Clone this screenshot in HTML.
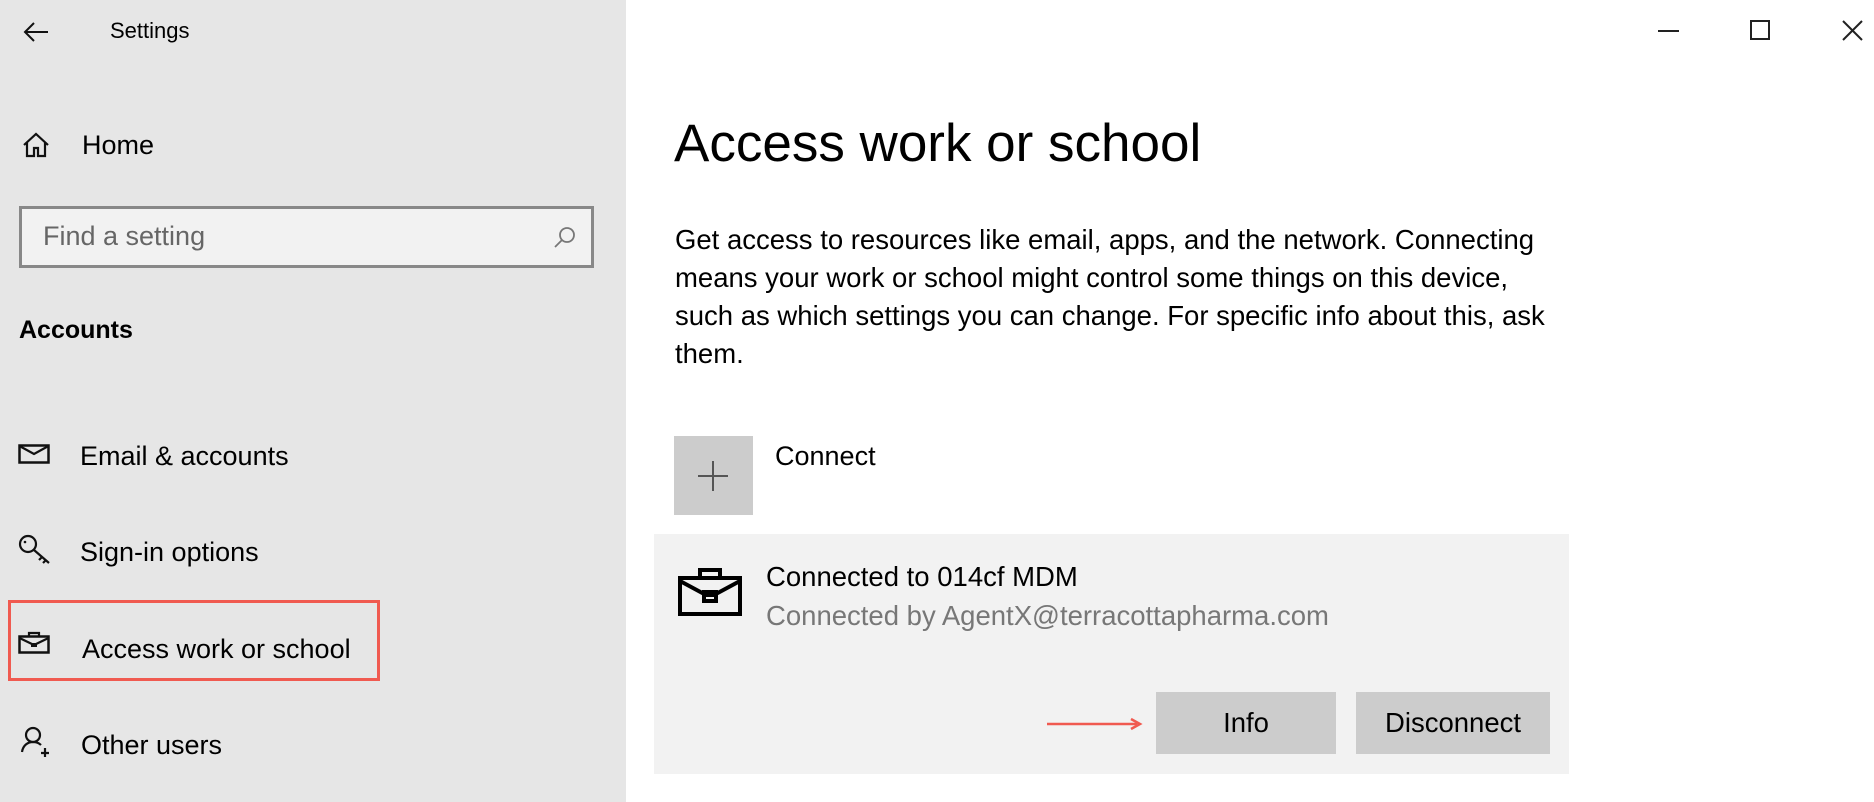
<!DOCTYPE html>
<html><head><meta charset="utf-8"><style>
*{margin:0;padding:0;box-sizing:border-box}
body{width:1874px;height:802px;overflow:hidden;background:#fff;font-family:"Liberation Sans",sans-serif;color:#000;position:relative}
.side{position:absolute;left:0;top:0;width:626px;height:802px;background:#e6e6e6}
.a{position:absolute;white-space:nowrap}
.nav{font-size:27px;line-height:32px}
svg{position:absolute;overflow:visible}
</style></head><body>
<div class="side"></div>
<svg style="left:22px;top:20px" width="28" height="24" viewBox="0 0 28 24"><path d="M26 12H3M12 3L3 12l9 9" fill="none" stroke="#111" stroke-width="2"/></svg>
<div class="a" style="left:110px;top:18px;font-size:22px">Settings</div>

<svg style="left:22px;top:131px" width="28" height="28" viewBox="0 0 28 28"><path d="M2 14L14 3l12 11M5 11v14h7v-8h4v8h7V11" fill="none" stroke="#111" stroke-width="2.2"/></svg>
<div class="a nav" style="left:82px;top:129px">Home</div>

<div class="a" style="left:19px;top:206px;width:575px;height:62px;border:3px solid #888;background:#f2f2f2"></div>
<div class="a" style="left:43px;top:221px;font-size:27px;color:#666">Find a setting</div>
<svg style="left:553px;top:226px" width="24" height="24" viewBox="0 0 24 24"><circle cx="14" cy="9" r="7" fill="none" stroke="#777" stroke-width="1.8"/><path d="M9 14L2 21" stroke="#777" stroke-width="1.8"/></svg>

<div class="a" style="left:19px;top:316px;font-size:25px;font-weight:bold">Accounts</div>

<svg style="left:18px;top:444px" width="32" height="20" viewBox="0 0 32 20"><rect x="1.5" y="1.5" width="29" height="17" fill="none" stroke="#111" stroke-width="2.5"/><path d="M1.5 2l14.5 8 14.5-8" fill="none" stroke="#111" stroke-width="2.2"/></svg>
<div class="a nav" style="left:80px;top:440px">Email &amp; accounts</div>

<svg style="left:18px;top:534px" width="34" height="32" viewBox="0 0 34 32"><circle cx="10" cy="10" r="8" fill="none" stroke="#111" stroke-width="2.2"/><circle cx="7" cy="8" r="1.3" fill="#111"/><path d="M16 16l15 13M24 23l-3 3M28 26l-3 3" fill="none" stroke="#111" stroke-width="2.2"/></svg>
<div class="a nav" style="left:80px;top:536px">Sign-in options</div>

<div class="a" style="left:8px;top:600px;width:372px;height:81px;border:3.5px solid #f05a50"></div>
<svg style="left:18px;top:632px" width="32" height="22" viewBox="0 0 32 22"><path d="M11 4V1h10v3" fill="none" stroke="#111" stroke-width="2.2"/><rect x="1.5" y="4.5" width="29" height="16" fill="none" stroke="#111" stroke-width="2.5"/><path d="M1.5 6l14.5 7 14.5-7" fill="none" stroke="#111" stroke-width="2.2"/><rect x="13" y="11" width="6" height="4" fill="#111"/></svg>
<div class="a nav" style="left:82px;top:633px">Access work or school</div>

<svg style="left:20px;top:726px" width="32" height="32" viewBox="0 0 32 32"><circle cx="13" cy="9" r="7" fill="none" stroke="#111" stroke-width="2.2"/><path d="M2 26c1-7 6-10 11-10 4 0 6 1 8 3M25 22v9M21 27h8" fill="none" stroke="#111" stroke-width="2.2"/></svg>
<div class="a nav" style="left:81px;top:729px">Other users</div>

<svg style="left:1658px;top:30px" width="22" height="3"><rect width="21" height="2" fill="#222"/></svg>
<svg style="left:1750px;top:20px" width="22" height="22"><rect x="1" y="1" width="18" height="18" fill="none" stroke="#222" stroke-width="2"/></svg>
<svg style="left:1842px;top:20px" width="22" height="22"><path d="M1 1l19 19M20 1L1 20" stroke="#222" stroke-width="2"/></svg>

<div class="a" style="left:674px;top:112px;font-size:53px;line-height:64px">Access work or school</div>
<div class="a" style="left:675px;top:221px;font-size:27.5px;line-height:38px">Get access to resources like email, apps, and the network. Connecting<br>means your work or school might control some things on this device,<br>such as which settings you can change. For specific info about this, ask<br>them.</div>

<div class="a" style="left:674px;top:436px;width:79px;height:79px;background:#ccc"></div>
<svg style="left:698px;top:461px" width="30" height="30"><path d="M15 0v30M0 15h30" stroke="#555" stroke-width="2"/></svg>
<div class="a" style="left:775px;top:441px;font-size:27px">Connect</div>

<div class="a" style="left:654px;top:534px;width:915px;height:240px;background:#f2f2f2"></div>
<svg style="left:678px;top:568px" width="64" height="48" viewBox="0 0 64 48"><path d="M22 9V2h20v7" fill="none" stroke="#000" stroke-width="4"/><rect x="2" y="10" width="60" height="36" fill="none" stroke="#000" stroke-width="4"/><path d="M2 13l26 14h8l26-14" fill="none" stroke="#000" stroke-width="4"/><rect x="26" y="24" width="12" height="9" fill="none" stroke="#000" stroke-width="4"/></svg>
<div class="a" style="left:766px;top:561px;font-size:27.5px">Connected to 014cf MDM</div>
<div class="a" style="left:766px;top:600px;font-size:27.5px;color:#777">Connected by AgentX@terracottapharma.com</div>

<div class="a" style="left:1156px;top:692px;width:180px;height:62px;background:#ccc;font-size:27.5px;text-align:center;line-height:62px">Info</div>
<div class="a" style="left:1356px;top:692px;width:194px;height:62px;background:#ccc;font-size:27.5px;text-align:center;line-height:62px">Disconnect</div>
<svg style="left:1047px;top:717px" width="96" height="14"><path d="M0 7h90" stroke="#f05a50" stroke-width="2.5"/><path d="M84 2l9 5-9 5" fill="none" stroke="#f05a50" stroke-width="2.5"/></svg>
</body></html>
